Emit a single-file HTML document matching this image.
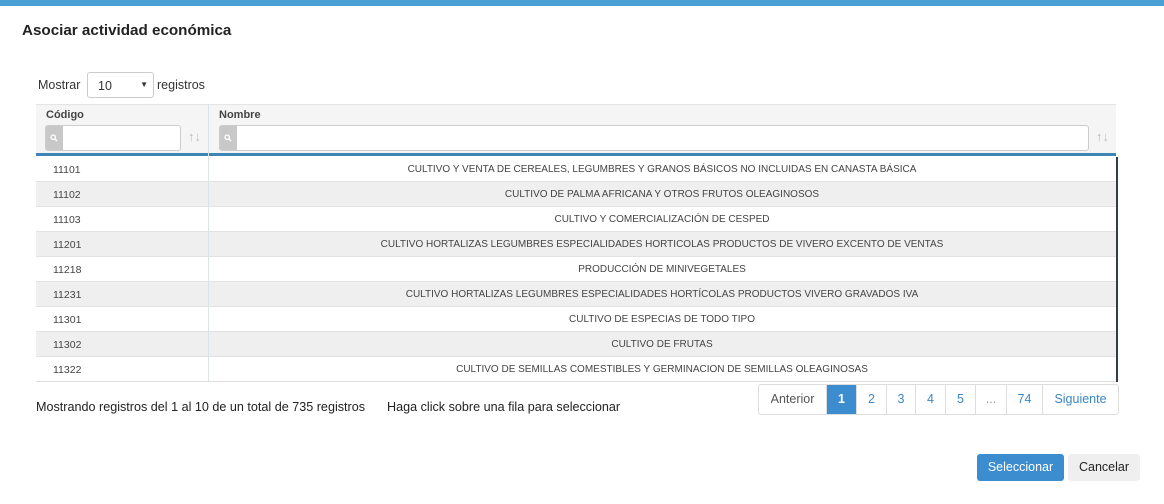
<!DOCTYPE html>
<html><head><meta charset="utf-8"><style>
*{box-sizing:border-box;margin:0;padding:0}
body{width:1164px;height:504px;background:#fff;font-family:"Liberation Sans",Arial,sans-serif;color:#333;position:relative;overflow:hidden}
.top{position:absolute;left:0;top:0;width:1164px;height:6px;background:#4a9fd5}
.title{position:absolute;left:22px;top:22px;font-size:15.2px;font-weight:bold;color:#222}
.mostrar{position:absolute;left:38px;top:78px;font-size:12.5px}
.sel{position:absolute;left:87px;top:72px;width:67px;height:26px;border:1px solid #ccc;border-radius:3px;font-size:12.5px;padding:6px 0 0 10px}
.sel:after{content:"▼";position:absolute;right:5px;top:7px;font-size:8px}
.reg{position:absolute;left:157px;top:78px;font-size:12.5px}
.head{position:absolute;left:36px;top:104px;width:1080px;height:52px;background:#f5f5f5;border-top:1px solid #e5e5e5;border-bottom:3px solid #3c86b5}
.hl{position:absolute;top:0;font-size:11px;font-weight:bold;color:#444}
.inp{position:absolute;top:20px;height:26px;border:1px solid #ccc;border-radius:3px;background:#fff}
.inp .ic{position:absolute;left:0;top:0;width:17px;height:24px;background:#c8c8c8;border-radius:2px 0 0 2px}
.inp .ic svg{position:absolute;left:4px;top:8px}
.sort{position:absolute;top:24px;font-size:13px;color:#bbb}
.vsep{position:absolute;left:208px;top:104px;width:1px;height:277px;background:#dde3ea}
.rows{position:absolute;left:36px;top:157px;width:1082px;border-right:2px solid #2d3e50}
.row{height:25px;border-bottom:1px solid #e2e2e2;font-size:10px;color:#444;position:relative}
.row:nth-child(even){background:#efefef}
.row .c{position:absolute;left:17px;top:7px;font-size:10.5px}
.row .n{position:absolute;left:172px;width:908px;text-align:center;top:7px}
.info{position:absolute;left:36px;top:400px;font-size:12.6px;color:#222}
.info2{position:absolute;left:387px;top:400px;font-size:12.6px;color:#222}
.pag{position:absolute;left:758px;top:384px;height:31px;display:flex;border:1px solid #ddd;border-radius:3px;font-size:12.5px}
.pag div{height:29px;line-height:29px;text-align:center;border-right:1px solid #ddd;color:#3c86c5}
.pag div:last-child{border-right:0}
.btn{position:absolute;top:454px;height:27px;border-radius:3px;font-size:12.5px;text-align:center;line-height:26px}
</style></head><body>
<div class="top"></div>
<div class="title">Asociar actividad económica</div>
<div class="mostrar">Mostrar</div>
<div class="sel">10</div>
<div class="reg">registros</div>
<div class="head">
<div class="hl" style="left:10px;top:4px">Código</div>
<div class="inp" style="left:9px;width:136px"><div class="ic"><svg width="8" height="8" viewBox="0 0 8 8"><circle cx="3.2" cy="3.2" r="2.2" fill="none" stroke="#fff" stroke-width="1.3"/><path d="M4.8 4.8L7 7" stroke="#fff" stroke-width="1.4"/></svg></div></div>
<div class="sort" style="left:152px">↑↓</div>
<div class="hl" style="left:183px;top:4px">Nombre</div>
<div class="inp" style="left:183px;width:870px"><div class="ic"><svg width="8" height="8" viewBox="0 0 8 8"><circle cx="3.2" cy="3.2" r="2.2" fill="none" stroke="#fff" stroke-width="1.3"/><path d="M4.8 4.8L7 7" stroke="#fff" stroke-width="1.4"/></svg></div></div>
<div class="sort" style="left:1060px">↑↓</div>
</div>
<div class="rows">
<div class="row"><span class="c">11101</span><span class="n">CULTIVO Y VENTA DE CEREALES, LEGUMBRES Y GRANOS BÁSICOS NO INCLUIDAS EN CANASTA BÁSICA</span></div>
<div class="row"><span class="c">11102</span><span class="n">CULTIVO DE PALMA AFRICANA Y OTROS FRUTOS OLEAGINOSOS</span></div>
<div class="row"><span class="c">11103</span><span class="n">CULTIVO Y COMERCIALIZACIÓN DE CESPED</span></div>
<div class="row"><span class="c">11201</span><span class="n">CULTIVO HORTALIZAS LEGUMBRES ESPECIALIDADES HORTICOLAS PRODUCTOS DE VIVERO EXCENTO DE VENTAS</span></div>
<div class="row"><span class="c">11218</span><span class="n">PRODUCCIÓN DE MINIVEGETALES</span></div>
<div class="row"><span class="c">11231</span><span class="n">CULTIVO HORTALIZAS LEGUMBRES ESPECIALIDADES HORTÍCOLAS PRODUCTOS VIVERO GRAVADOS IVA</span></div>
<div class="row"><span class="c">11301</span><span class="n">CULTIVO DE ESPECIAS DE TODO TIPO</span></div>
<div class="row"><span class="c">11302</span><span class="n">CULTIVO DE FRUTAS</span></div>
<div class="row" style="border-bottom:1px solid #ddd"><span class="c">11322</span><span class="n">CULTIVO DE SEMILLAS COMESTIBLES Y GERMINACION DE SEMILLAS OLEAGINOSAS</span></div>
</div>
<div class="vsep"></div>
<div class="info">Mostrando registros del 1 al 10 de un total de 735 registros</div>
<div class="info2">Haga click sobre una fila para seleccionar</div>
<div class="pag">
<div style="width:68px;color:#555">Anterior</div>
<div style="width:30px;background:#3c8dcf;color:#fff;font-weight:bold">1</div>
<div style="width:30px">2</div>
<div style="width:29px">3</div>
<div style="width:30px">4</div>
<div style="width:30px">5</div>
<div style="width:31px;color:#999">...</div>
<div style="width:36px">74</div>
<div style="width:75px">Siguiente</div>
</div>
<div class="btn" style="left:977px;width:87px;background:#3c8dcf;color:#fff">Seleccionar</div>
<div class="btn" style="left:1068px;width:72px;background:#efefef;color:#222">Cancelar</div>
</body></html>
